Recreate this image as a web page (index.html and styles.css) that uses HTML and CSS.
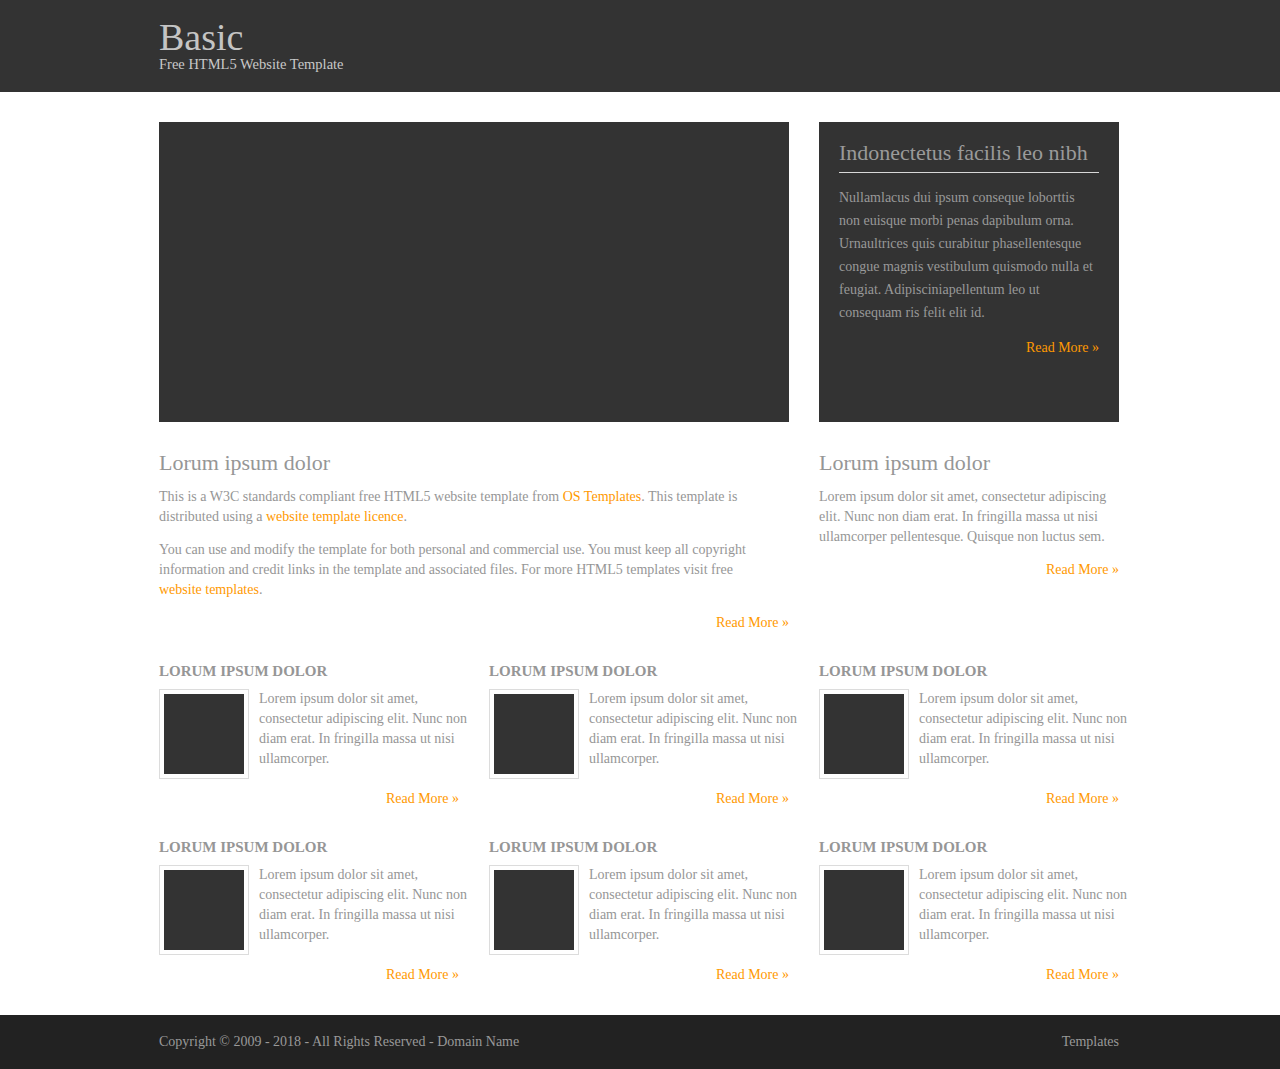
FILE: index.html
```html
<!DOCTYPE html>
<html lang="en">
<head>
<meta charset="utf-8">
<title>Basic</title>
<link rel="stylesheet" href="styles.css">
</head>
<body>
<header class="site-header">
  <div class="wrap">
    <h1 class="logo">Basic</h1>
    <p class="tagline">Free HTML5 Website Template</p>
  </div>
</header>
<main class="site-main">
  <div class="wrap">
    <div class="top-row">
      <div class="slider"></div>
      <aside class="feature">
        <h2 class="feature-title">Indonectetus facilis leo nibh</h2>
        <p class="feature-text">Nullamlacus dui ipsum conseque loborttis non euisque morbi penas dapibulum orna. Urnaultrices quis curabitur phasellentesque congue magnis vestibulum quismodo nulla et feugiat. Adipisciniapellentum leo ut consequam ris felit elit id.</p>
        <p class="more"><a href="#">Read More &raquo;</a></p>
      </aside>
    </div>
    <div class="intro-row">
      <section class="intro-main">
        <h2 class="section-title">Lorum ipsum dolor</h2>
        <p class="intro-text">This is a W3C standards compliant free HTML5 website template from <a href="#">OS Templates</a>. This template is distributed using a <a href="#">website template licence</a>.</p>
        <p class="intro-text">You can use and modify the template for both personal and commercial use. You must keep all copyright information and credit links in the template and associated files. For more HTML5 templates visit free <a href="#">website templates</a>.</p>
        <p class="more"><a href="#">Read More &raquo;</a></p>
      </section>
      <section class="intro-side">
        <h2 class="section-title">Lorum ipsum dolor</h2>
        <p>Lorem ipsum dolor sit amet, consectetur adipiscing elit. Nunc non diam erat. In fringilla massa ut nisi ullamcorper pellentesque. Quisque non luctus sem.</p>
        <p class="more"><a href="#">Read More &raquo;</a></p>
      </section>
    </div>
    <div class="grid">
      <article class="card">
        <h3 class="card-title">Lorum ipsum dolor</h3>
        <div class="card-body"><div class="thumb"><div class="thumb-img"></div></div><p>Lorem ipsum dolor sit amet, consectetur adipiscing elit. Nunc non diam erat. In fringilla massa ut nisi ullamcorper.</p></div>
        <p class="more"><a href="#">Read More &raquo;</a></p>
      </article>
      <article class="card">
        <h3 class="card-title">Lorum ipsum dolor</h3>
        <div class="card-body"><div class="thumb"><div class="thumb-img"></div></div><p>Lorem ipsum dolor sit amet, consectetur adipiscing elit. Nunc non diam erat. In fringilla massa ut nisi ullamcorper.</p></div>
        <p class="more"><a href="#">Read More &raquo;</a></p>
      </article>
      <article class="card">
        <h3 class="card-title">Lorum ipsum dolor</h3>
        <div class="card-body"><div class="thumb"><div class="thumb-img"></div></div><p>Lorem ipsum dolor sit amet, consectetur adipiscing elit. Nunc non diam erat. In fringilla massa ut nisi ullamcorper.</p></div>
        <p class="more"><a href="#">Read More &raquo;</a></p>
      </article>
      <article class="card">
        <h3 class="card-title">Lorum ipsum dolor</h3>
        <div class="card-body"><div class="thumb"><div class="thumb-img"></div></div><p>Lorem ipsum dolor sit amet, consectetur adipiscing elit. Nunc non diam erat. In fringilla massa ut nisi ullamcorper.</p></div>
        <p class="more"><a href="#">Read More &raquo;</a></p>
      </article>
      <article class="card">
        <h3 class="card-title">Lorum ipsum dolor</h3>
        <div class="card-body"><div class="thumb"><div class="thumb-img"></div></div><p>Lorem ipsum dolor sit amet, consectetur adipiscing elit. Nunc non diam erat. In fringilla massa ut nisi ullamcorper.</p></div>
        <p class="more"><a href="#">Read More &raquo;</a></p>
      </article>
      <article class="card">
        <h3 class="card-title">Lorum ipsum dolor</h3>
        <div class="card-body"><div class="thumb"><div class="thumb-img"></div></div><p>Lorem ipsum dolor sit amet, consectetur adipiscing elit. Nunc non diam erat. In fringilla massa ut nisi ullamcorper.</p></div>
        <p class="more"><a href="#">Read More &raquo;</a></p>
      </article>
    </div>
  </div>
</main>
<footer class="site-footer">
  <div class="wrap footer-inner">
    <p>Copyright &copy; 2009 - 2018 - All Rights Reserved - <a href="#">Domain Name</a></p>
    <p><a href="#">Templates</a></p>
  </div>
</footer>
</body>
</html>
```
FILE: styles.css
```css
* { box-sizing: border-box; }
html, body { margin: 0; padding: 0; }
body {
  font-family: "Liberation Serif", "DejaVu Serif", serif;
  font-size: 14px;
  line-height: 20px;
  color: #969696;
  background: #fff;
}
a { color: #ff9900; text-decoration: none; }
p { margin: 0 0 13px; }
.wrap { width: 960px; margin: 0 0 0 calc(50% - 481px); }

.site-header { background: #333333; height: 92px; padding-top: 18px; }
.logo { margin: 0; font-size: 38px; line-height: 38px; font-weight: normal; color: #c4c4c4; }
.tagline { margin: 0; font-size: 14.5px; line-height: 17px; color: #c8c8c8; }

.site-main { padding: 30px 0 30px; }
.top-row { display: flex; gap: 30px; }
.slider { width: 630px; height: 300px; background: #333333; }
.feature { width: 300px; height: 300px; background: #333333; padding: 18px 20px 20px; }
.feature-title { margin: 0 0 13px; font-size: 22px; line-height: 26px; font-weight: normal; color: #9a9a9a; padding-bottom: 6px; border-bottom: 1px solid #d8d8d8; }
.feature-text { line-height: 23px; color: #999; margin-bottom: 14px; }
.more { text-align: right; margin: 0; }

.intro-row { display: flex; gap: 30px; margin-top: 28px; }
.intro-main { width: 630px; }
.intro-text { max-width: 600px; }
.intro-side { width: 300px; }
.section-title { margin: 0 0 11px; font-size: 22px; line-height: 26px; font-weight: normal; color: #969696; }

.grid { display: grid; grid-template-columns: repeat(3, 300px); column-gap: 30px; row-gap: 30px; margin-top: 30px; }
.card-title { margin: 0 0 10px; font-size: 15px; line-height: 16px; font-weight: bold; text-transform: uppercase; color: #969696; }
.card-body { display: flex; gap: 10px; align-items: flex-start; margin-right: -10px; }
.card-body p { margin: 0; line-height: 20px; }
.thumb { flex: none; width: 90px; height: 90px; border: 1px solid #dcdcdc; padding: 4px; }
.thumb-img { width: 80px; height: 80px; background: #333333; }
.card .more { margin-top: 10px; }

.site-footer { background: #222222; height: 54px; }
.footer-inner { display: flex; justify-content: space-between; align-items: center; height: 54px; }
.footer-inner p { margin: 0; color: #999; }
.footer-inner a { color: #999; }
```
